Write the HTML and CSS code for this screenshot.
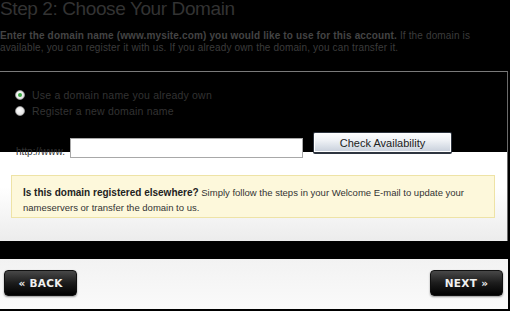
FILE: index.html
```html
<!DOCTYPE html>
<html>
<head>
<meta charset="utf-8">
<link rel="stylesheet" href="styles.css">
</head>
<body>
<div class="page">
  <h1 class="title">Step 2: Choose Your Domain</h1>
  <p class="intro"><strong>Enter the domain name (www.mysite.com) you would like to use for this account.</strong> If the domain is available, you can register it with us. If you already own the domain, you can transfer it.</p>

  <div class="panel">
    <div class="options">
      <label class="option"><span class="radio checked"></span>Use a domain name you already own</label>
      <label class="option"><span class="radio"></span>Register a new domain name</label>
    </div>
    <div class="form-row">
      <span class="prefix">http://www.</span>
      <span class="field"></span>
      <button class="check">Check Availability</button>
    </div>
    <div class="notice">
      <strong>Is this domain registered elsewhere?</strong> Simply follow the steps in your Welcome E-mail to update your nameservers or transfer the domain to us.
    </div>
  </div>

  <div class="footer">
    <button class="nav">&laquo; BACK</button>
    <button class="nav">NEXT &raquo;</button>
  </div>
</div>
</body>
</html>
```

FILE: styles.css
```css
html, body {
  margin: 0;
  padding: 0;
  background: #000;
  height: 311px;
  overflow: hidden;
}

.page {
  width: 510px;
  font-family: "Liberation Sans", Arial, sans-serif;
}

.title {
  margin: 0;
  font-size: 19px;
  line-height: 18px;
  font-weight: normal;
  letter-spacing: -0.4px;
  color: #333;
}

.intro {
  margin: 12px 0 0 0;
  font-size: 10px;
  line-height: 12px;
  color: #3c3c3c;
  letter-spacing: 0.15px;
}

.intro strong {
  color: #444;
}

.panel {
  margin-top: 17px;
  width: 507px;
  height: 169px;
  border-top: 1px solid #7a7a7a;
  border-right: 1px solid #6a6a6a;
  background: linear-gradient(#000 0, #000 80px, #fff 80px, #fff 115px, #ececec 169px);
}

.options {
  padding: 15px 0 0 15px;
  display: flex;
  flex-direction: column;
}

.option {
  display: flex;
  align-items: center;
  height: 16px;
  font-size: 10.5px;
  color: #333;
  letter-spacing: 0.2px;
}

.radio {
  width: 8px;
  height: 8px;
  border-radius: 50%;
  background: radial-gradient(circle at 40% 40%, #fff, #d8d8d8);
  border: 1px solid #9a9a9a;
  margin-right: 7px;
  position: relative;
}

.radio.checked::after {
  content: "";
  position: absolute;
  left: 2px;
  top: 2px;
  width: 4px;
  height: 4px;
  border-radius: 50%;
  background: #3aa843;
}

.form-row {
  display: flex;
  align-items: flex-start;
  margin-top: 13px;
  padding-left: 16px;
}

.prefix {
  margin-top: 14px;
  font-size: 10px;
  line-height: 12px;
  color: #333;
  width: 54px;
}

.field {
  margin-top: 6px;
  width: 231px;
  height: 18px;
  border: 1px solid #a8a8a8;
  background: #fff;
}

.check {
  margin-left: 10px;
  width: 139px;
  height: 22px;
  border: 1px solid #2e3540;
  border-bottom-width: 2px;
  border-radius: 2px;
  background: linear-gradient(#ffffff, #eef1f5 40%, #c7cfdb);
  font-family: "Liberation Sans", Arial, sans-serif;
  font-size: 11px;
  color: #222;
  padding: 0;
  box-shadow: inset 0 0 0 1px #fff;
}

.notice {
  margin: 17px 0 0 11px;
  width: 460px;
  height: 28px;
  padding: 9px 11px 4px 11px;
  background: #fdf8db;
  border: 1px solid #eee3a6;
  font-size: 9.5px;
  line-height: 15px;
  color: #333;
}

.notice strong {
  font-size: 10px;
  color: #222;
}

.footer {
  margin-top: 18px;
  width: 508px;
  height: 50px;
  background: linear-gradient(#f2f2f2, #fafafa);
  display: flex;
  justify-content: space-between;
  align-items: flex-start;
  padding: 11px 5px 0 4px;
  box-sizing: border-box;
}

.nav {
  width: 73px;
  height: 26px;
  border: 1px solid #111;
  border-radius: 4px;
  background: linear-gradient(#484848, #1c1c1c 50%, #000);
  color: #f0f0f0;
  font-family: "DejaVu Sans", Verdana, sans-serif;
  font-weight: bold;
  font-size: 10.5px;
  letter-spacing: 0.3px;
  box-shadow: 0 1px 2px rgba(0,0,0,0.4);
  padding: 0;
}
```
